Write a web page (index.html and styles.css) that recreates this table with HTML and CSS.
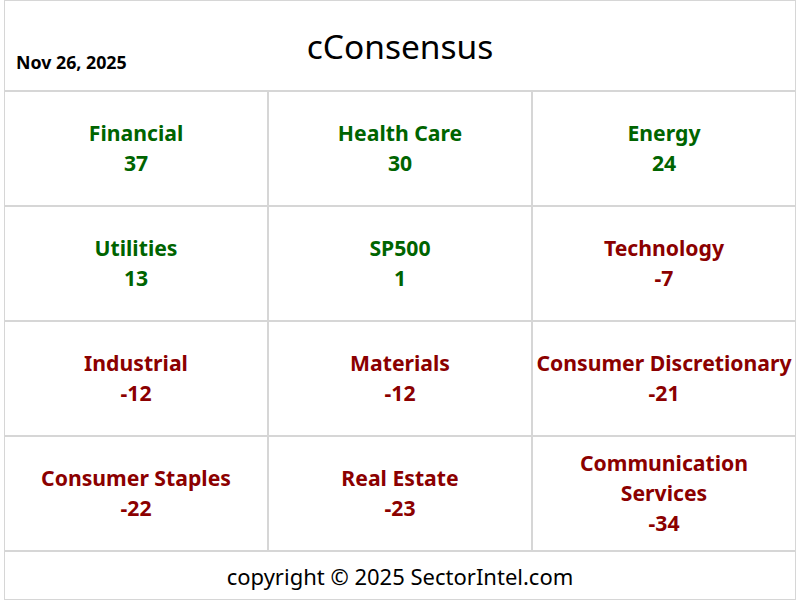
FILE: index.html
```html
<!DOCTYPE html>
<html>
<head>
<meta charset="utf-8">
<link rel="stylesheet" href="styles.css">
</head>
<body>
<div class="page">
  <div class="header">
    <div class="date">Nov 26, 2025</div>
    <h1 class="title">cConsensus</h1>
  </div>
  <div class="grid">
    <div class="cell up"><div>Financial</div><div>37</div></div>
    <div class="cell up"><div>Health Care</div><div>30</div></div>
    <div class="cell up"><div>Energy</div><div>24</div></div>
    <div class="cell up"><div>Utilities</div><div>13</div></div>
    <div class="cell up"><div>SP500</div><div>1</div></div>
    <div class="cell down"><div>Technology</div><div>-7</div></div>
    <div class="cell down"><div>Industrial</div><div>-12</div></div>
    <div class="cell down"><div>Materials</div><div>-12</div></div>
    <div class="cell down"><div>Consumer Discretionary</div><div>-21</div></div>
    <div class="cell down"><div>Consumer Staples</div><div>-22</div></div>
    <div class="cell down"><div>Real Estate</div><div>-23</div></div>
    <div class="cell down"><div>Communication<br>Services</div><div>-34</div></div>
  </div>
  <div class="footer">copyright © 2025 SectorIntel.com</div>
</div>
</body>
</html>
```

FILE: styles.css
```css
html, body {
  margin: 0;
  padding: 0;
  background: #ffffff;
}
body {
  font-family: "Noto Sans", "Open Sans", "DejaVu Sans", sans-serif;
  color: #000;
}
.page {
  margin: 0 4px;
  border: 1px solid #d6d6d6;
  border-bottom: none;
  height: 599px;
  display: flex;
  flex-direction: column;
}
.header {
  height: 89px;
  position: relative;
  display: flex;
  align-items: flex-end;
  justify-content: center;
  border-bottom: 2px solid #d6d6d6;
}
.title {
  margin: 0 0 22px 0;
  font-size: 33.5px;
  font-weight: normal;
  line-height: 44px;
}
.date {
  position: absolute;
  left: 11px;
  bottom: 17px;
  font-size: 17.8px;
  font-weight: bold;
  line-height: 22px;
}
.grid {
  display: grid;
  grid-template-columns: 262px 262px 1fr;
  grid-auto-rows: 113px;
  gap: 2px;
  background: #d6d6d6;
  border-bottom: 2px solid #d6d6d6;
}
.cell {
  background: #fff;
  display: flex;
  flex-direction: column;
  justify-content: center;
  align-items: center;
  text-align: center;
  font-size: 21.2px;
  font-weight: bold;
  line-height: 30px;
  padding-bottom: 2px;
}
.up { color: #006400; }
.down { color: #8b0000; }
.footer {
  flex: 1;
  display: flex;
  align-items: center;
  justify-content: center;
  font-size: 22px;
  border-bottom: 1px solid #d6d6d6;
}
```
